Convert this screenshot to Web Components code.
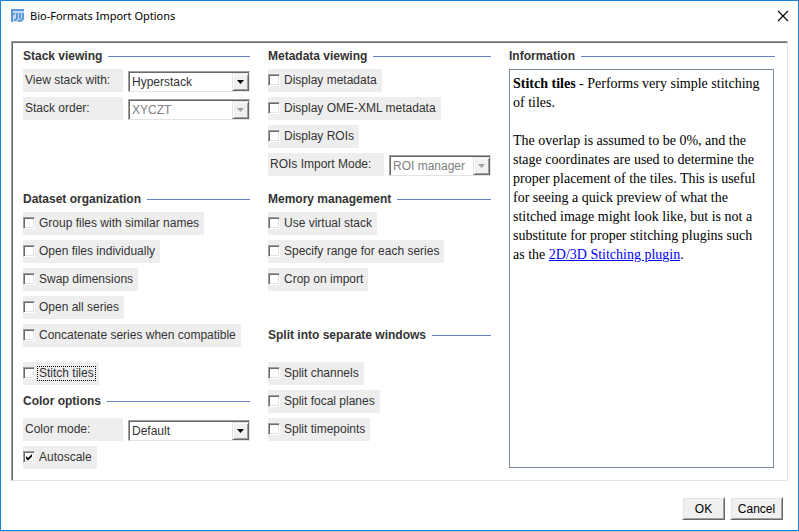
<!DOCTYPE html>
<html lang="en">
<head>
<meta charset="utf-8">
<title>Bio-Formats Import Options</title>
<style>
html, body { height: 100%; margin: 0; }
body { background: #fff; font: 12px/15px "Liberation Sans", Arial, sans-serif; color: #333; }
</style>
</head>
<body>
<import-dialog></import-dialog>
<script>
function define(name, html, setup) {
  const template = document.createElement('template');
  template.innerHTML = '<style>*{box-sizing:border-box}</style>' + html;
  customElements.define(name, class extends HTMLElement {
    connectedCallback() {
      if (this.shadowRoot) return;
      const root = this.attachShadow({ mode: 'open' });
      root.append(template.content.cloneNode(true));
      if (setup) setup(this, root);
    }
  });
}

define('title-bar', `
<style>
:host { display: flex; align-items: center; height: 30px; padding: 0 9px; gap: 5px; color: #000; font: 11px/16px "Noto Sans", "Open Sans", sans-serif; }
h1 { flex: 1; margin: 0; font: inherit; }
button { width: 12px; height: 12px; padding: 0; border: 0; background: none; }
svg { display: block; }
</style>
<svg width="15" height="15" viewBox="0 0 15 15" aria-hidden="true">
  <path d="M1 0H14V11L11 13H2L1 12Z" fill="#c3daf2"/>
  <path d="M1 1H14M2 1V13M2 5H5M7 4V9Q7 11 4 11M10 4V10M13 4V9Q13 12 8 12" fill="none" stroke="#5f98d8" stroke-width="2"/>
</svg>
<h1><slot></slot></h1>
<button type="button" aria-label="Close"><svg width="12" height="12" viewBox="0 0 12 12"><path d="M1 1L11 11M11 1L1 11" stroke="#000" stroke-width="1.1"/></svg></button>`);

define('option-section', `
<style>
:host { display: flex; flex-direction: column; align-items: flex-start; gap: 5px; }
header { display: flex; align-items: center; gap: 6px; align-self: stretch; height: 23px; margin-bottom: -4px; }
:host([loose]) header { margin-bottom: 0; }
:host([wide]) header { margin-bottom: 10px; }
h2 { margin: 0; font: bold 12px/15px "Liberation Sans", Arial, sans-serif; white-space: nowrap; }
header::after { content: ""; flex: 1; height: 1px; background: #6382bf; }
</style>
<header><h2></h2></header><slot></slot>`, (host, root) => {
  root.querySelector('h2').textContent = host.getAttribute('heading');
});

define('check-option', `
<style>
:host { display: block; }
label { display: flex; align-items: center; height: 23px; padding-right: 3px; gap: 2px; background: #eee; white-space: nowrap; }
input { appearance: none; position: relative; width: 12px; height: 12px; margin: 0 0 1px; background: #fff; border: 1px solid; border-color: #a0a0a0 #fff #fff #a0a0a0; box-shadow: inset 1px 1px #696969, inset -1px -1px #e3e3e3; outline: 0; }
input:checked::after { content: ""; position: absolute; inset: 0; background: #000; clip-path: polygon(20% 40%, 40% 60%, 80% 20%, 80% 45%, 40% 85%, 20% 65%); }
span { padding: 0 1px; border: 1px solid transparent; line-height: 13px; }
:host([focused]) span { border: 1px dotted #000; }
</style>
<label><input type="checkbox"><span><slot></slot></span></label>`, (host, root) => {
  root.querySelector('input').checked = host.hasAttribute('checked');
});

define('select-option', `
<style>
:host { display: flex; gap: 5px; align-self: stretch; height: 23px; }
label { flex: 0 0 var(--label, 100px); padding: 4px 0 4px 2px; background: #eee; white-space: nowrap; }
.box { flex: 1; position: relative; height: 21px; margin-top: 2px; background: #fff; border: 1px solid; border-color: #a0a0a0 #e3e3e3 #e3e3e3 #a0a0a0; box-shadow: inset 1px 1px #696969; }
select { appearance: none; width: 100%; height: 100%; padding: 2px 18px 0 3px; border: 0; background: none; font: inherit; color: #333; opacity: 1; }
select:disabled { color: #808080; }
i { position: absolute; top: 1px; right: 0; bottom: 0; width: 17px; display: grid; place-items: center; pointer-events: none; background: #f0f0f0; border: 1px solid; border-color: #e3e3e3 #696969 #696969 #e3e3e3; box-shadow: inset 1px 1px #fff, inset -1px -1px #a0a0a0; }
i::before { content: ""; width: 7px; height: 4px; background: #000; clip-path: polygon(0 0, 100% 0, 50% 100%); }
:host([disabled]) i::before { background: #a0a0a0; }
</style>
<label for="choice"></label><div class="box"><select id="choice"><option></option></select><i></i></div>`, (host, root) => {
  root.querySelector('label').textContent = host.getAttribute('label');
  root.querySelector('option').textContent = host.getAttribute('value');
  root.querySelector('select').disabled = host.hasAttribute('disabled');
});

define('info-text', `
<style>
:host { display: block; box-sizing: border-box; flex: 1; align-self: stretch; margin: 0 1px 1px 0; padding: 4px 12px 4px 3px; border: 1px solid #7a8a99; background: #fff; color: #000; font: 14px/19px "Liberation Serif", "Times New Roman", serif; }
</style><slot></slot>`);

define('push-button', `
<style>
:host { display: block; }
button { height: 23px; padding: 1px 0 0; width: 100%; color: #000; font: inherit; background: #f0f0f0; border: 1px solid; border-color: #fff #696969 #696969 #fff; box-shadow: inset 1px 1px #e3e3e3, inset -1px -1px #a0a0a0; }
</style><button type="button"><slot></slot></button>`);

define('import-dialog', `
<style>
:host { display: flex; flex-direction: column; min-height: 100%; box-sizing: border-box; padding-bottom: 1px; background: #b4c4ce; }
.window { flex: 1; display: flex; flex-direction: column; background: #fff; border: 1px solid #1883d7; }
main { flex: 1; display: grid; grid-template-columns: 227fr 223fr 266fr; gap: 18px; margin: 10px 10px 0; padding: 3px 12px 11px 11px; border: 1px solid; border-color: #a0a0a0 #e3e3e3 #e3e3e3 #a0a0a0; box-shadow: inset 1px 1px #696969; }
.column { display: flex; flex-direction: column; min-width: 0; }
.first { min-height: 131px; margin-bottom: 12px; }
.memory { margin-bottom: 33px; }
.apart { margin-top: 10px; }
.colors { margin-top: 5px; }
.info { min-height: 0; }
footer { display: flex; justify-content: flex-end; gap: 5px; padding: 16px 15px 10px; }
.ok { width: 43px; } .cancel { width: 53px; }
a { color: #00f; }
p { margin: 0 0 19px; }
</style>
<div class="window">
<title-bar>Bio-Formats Import Options</title-bar>
<main>
  <div class="column">
    <option-section class="first" heading="Stack viewing">
      <select-option label="View stack with:" value="Hyperstack"></select-option>
      <select-option label="Stack order:" value="XYCZT" disabled></select-option>
    </option-section>
    <option-section heading="Dataset organization">
      <check-option>Group files with similar names</check-option>
      <check-option>Open files individually</check-option>
      <check-option>Swap dimensions</check-option>
      <check-option>Open all series</check-option>
      <check-option>Concatenate series when compatible</check-option>
      <check-option class="apart" focused>Stitch tiles</check-option>
    </option-section>
    <option-section class="colors" loose heading="Color options">
      <select-option label="Color mode:" value="Default"></select-option>
      <check-option checked>Autoscale</check-option>
    </option-section>
  </div>
  <div class="column">
    <option-section class="first" heading="Metadata viewing">
      <check-option>Display metadata</check-option>
      <check-option>Display OME-XML metadata</check-option>
      <check-option>Display ROIs</check-option>
      <select-option style="--label:116px" label="ROIs Import Mode:" value="ROI manager" disabled></select-option>
    </option-section>
    <option-section class="memory" heading="Memory management">
      <check-option>Use virtual stack</check-option>
      <check-option>Specify range for each series</check-option>
      <check-option>Crop on import</check-option>
    </option-section>
    <option-section wide heading="Split into separate windows">
      <check-option>Split channels</check-option>
      <check-option>Split focal planes</check-option>
      <check-option>Split timepoints</check-option>
    </option-section>
  </div>
  <option-section class="info" heading="Information">
    <info-text><p><b>Stitch tiles</b> - Performs very simple stitching of tiles.</p>
    The overlap is assumed to be 0%, and the stage coordinates are used to determine the proper placement of the tiles. This is useful for seeing a quick preview of what the stitched image might look like, but is not a substitute for proper stitching plugins such as the <a href="#stitching">2D/3D Stitching plugin</a>.</info-text>
  </option-section>
</main>
<footer><push-button class="ok">OK</push-button><push-button class="cancel">Cancel</push-button></footer>
</div>`);
</script>
</body>
</html>
